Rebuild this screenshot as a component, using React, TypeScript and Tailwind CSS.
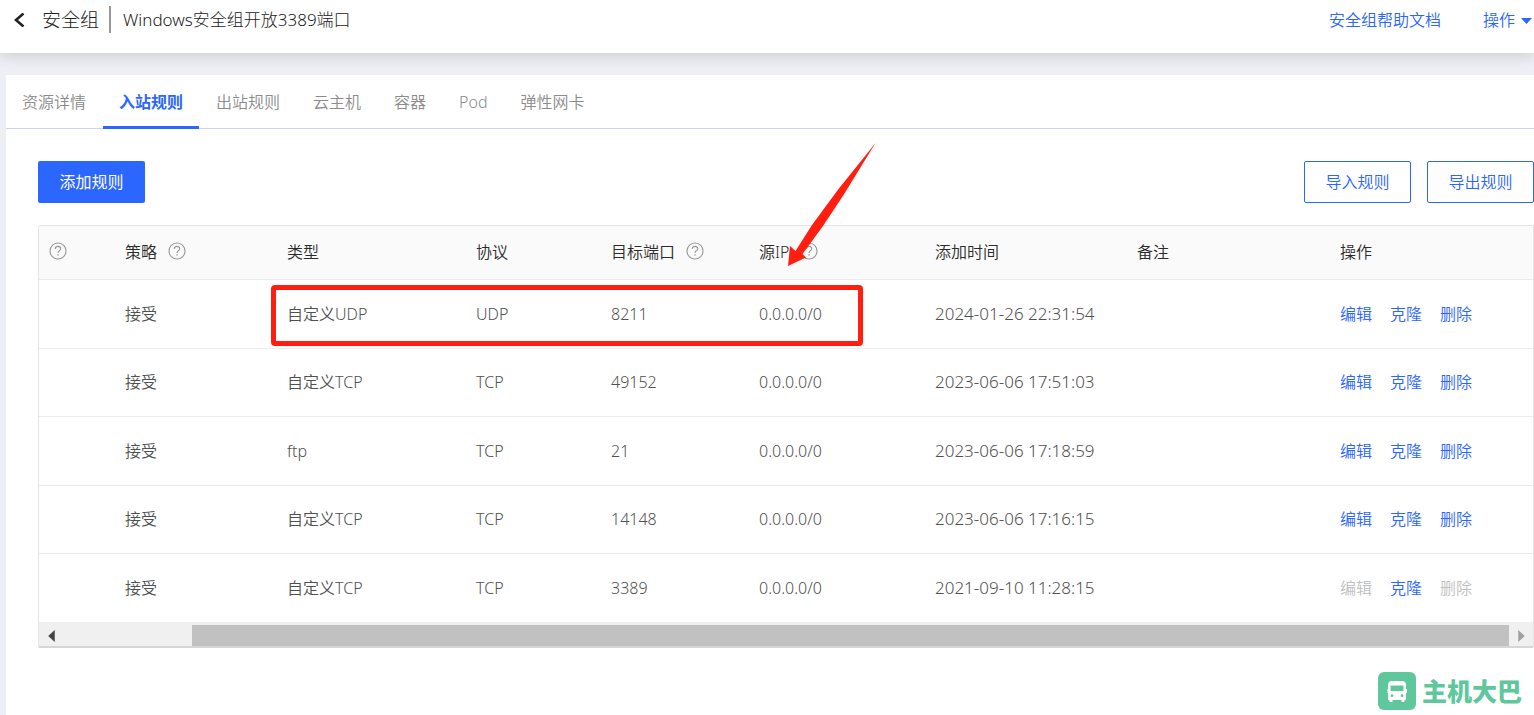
import React from "react";

type Rule = { type: string; protocol: string; port: string; source: string; time: string; locked?: boolean };

const rules: Rule[] = [
  { type: "自定义UDP", protocol: "UDP", port: "8211", source: "0.0.0.0/0", time: "2024-01-26 22:31:54" },
  { type: "自定义TCP", protocol: "TCP", port: "49152", source: "0.0.0.0/0", time: "2023-06-06 17:51:03" },
  { type: "ftp", protocol: "TCP", port: "21", source: "0.0.0.0/0", time: "2023-06-06 17:18:59" },
  { type: "自定义TCP", protocol: "TCP", port: "14148", source: "0.0.0.0/0", time: "2023-06-06 17:16:15" },
  { type: "自定义TCP", protocol: "TCP", port: "3389", source: "0.0.0.0/0", time: "2021-09-10 11:28:15", locked: true },
];

const tabs = ["资源详情", "入站规则", "出站规则", "云主机", "容器", "Pod", "弹性网卡"];

function HelpIcon() {
  return (
    <svg className="mb-[3px] size-[18px] shrink-0" viewBox="0 0 18 18" fill="none" stroke="#999" strokeWidth="1.1" aria-hidden="true">
      <circle cx="9" cy="9" r="8" />
      <path d="M6.300 7C6.300 5.400 7.400 4.400 9 4.400s2.700 1 2.700 2.300c0 1.800-2.700 2.100-2.700 4.200" />
      <path d="M9 12.300v1.400" />
    </svg>
  );
}

function Heading({ text, help }: { text: string; help?: boolean }) {
  return (
    <th className="pl-4 text-left font-[350] text-[#2b2b2b]">
      <span className="flex items-center gap-[11px]">
        {text}
        {help && <HelpIcon />}
      </span>
    </th>
  );
}

function Watermark() {
  return (
    <div className="pointer-events-none absolute inset-0 overflow-hidden" aria-hidden="true">
      <div className="grid w-max auto-rows-[195px] grid-cols-[repeat(4,322px)] pl-[75px] text-[22px] font-normal leading-[24px] text-black/[0.024]">
        {Array.from({ length: 16 }, (_, i) => (
          <span key={i} className="origin-bottom-left -rotate-20 self-start pt-[50px]">
            zhangbao14-706279
          </span>
        ))}
      </div>
    </div>
  );
}

export default function App() {
  return (
    <div className="relative flex min-h-screen flex-col overflow-hidden bg-[#eeeff4] font-['Noto_Sans','Noto_Sans_CJK_SC',sans-serif] text-base font-[350] text-[#505050]">
      <header className="flex h-[53px] items-start justify-between bg-white shadow-[0_2px_14px_rgba(0,0,0,0.16)]">
        <div className="flex h-10 items-center text-[#222]">
          <button type="button" aria-label="返回" className="ml-3 mr-4 flex">
            <svg className="size-[14px]" viewBox="0 0 14 14" fill="none" stroke="#222" strokeWidth="2.6">
              <path d="M11.500 0.500L4 7l7.500 6.500" />
            </svg>
          </button>
          <h1 className="text-[19px] font-light">安全组</h1>
          <span className="ml-[10px] mr-3 mt-[-2px] h-[27px] w-[2px] bg-[#999]" />
          <span className="text-[17px] font-light">Windows安全组开放3389端口</span>
        </div>
        <div className="flex h-10 items-center gap-[42px] text-[#2b66ff]">
          <a href="#help">安全组帮助文档</a>
          <button type="button" className="flex items-center gap-[6px] pr-[2px]">
            操作
            <svg className="mt-[2px] h-[6px] w-[11px]" viewBox="0 0 11 6" fill="#2b66ff" aria-hidden="true">
              <path d="M0 0h11L5.500 6z" />
            </svg>
          </button>
        </div>
      </header>

      <main className="ml-[6px] mt-[22px] flex-1 bg-white">
        <nav className="flex h-[54px] gap-px border-b border-[#ccd3ea] text-[#8c8c8c]">
          {tabs.map((t) => (
            <button
              key={t}
              type="button"
              className={
                t === "入站规则"
                  ? "mb-[-1px] border-b-[3px] border-[#2b66ff] px-4 pt-[2px] font-bold text-[#2b66ff]"
                  : "px-4"
              }
            >
              {t}
            </button>
          ))}
        </nav>

        <div className="flex justify-between pl-8 pt-8">
          <button type="button" className="h-[42px] w-[107px] rounded-[2px] bg-[#2b66ff] font-normal text-white">
            添加规则
          </button>
          <div className="flex gap-4 text-[#2b66ff]">
            <button type="button" className="h-[42px] w-[107px] rounded-[2px] border border-[#2b66ff]">
              导入规则
            </button>
            <button type="button" className="h-[42px] w-[107px] rounded-[2px] border border-[#2b66ff]">
              导出规则
            </button>
          </div>
        </div>

        <section className="relative ml-8 mt-[22px] rounded-[2px] border border-b-2 border-[#e4e4e4] border-b-[#d6d6d6]">
          <table className="w-full table-fixed border-collapse">
            <colgroup>
              <col className="w-[70px]" />
              <col className="w-[162px]" />
              <col className="w-[189px]" />
              <col className="w-[135px]" />
              <col className="w-[148px]" />
              <col className="w-[176px]" />
              <col className="w-[202px]" />
              <col className="w-[203px]" />
              <col />
            </colgroup>
            <thead>
              <tr className="h-[53px] border-b border-[#ebebeb] bg-[#fafafa]">
                <th className="pl-[10px]" aria-label="优先级">
                  <HelpIcon />
                </th>
                <Heading text="策略" help />
                <Heading text="类型" />
                <Heading text="协议" />
                <Heading text="目标端口" help />
                <Heading text="源IP" help />
                <Heading text="添加时间" />
                <Heading text="备注" />
                <Heading text="操作" />
              </tr>
            </thead>
            <tbody>
              {rules.map((r) => (
                <tr key={r.time} className="border-b border-[#ebebeb] last:border-b-0 odd:h-[69px] even:h-[68px]">
                  <td />
                  <td className="pl-4">接受</td>
                  <td className="pl-4">{r.type}</td>
                  <td className="pl-4">{r.protocol}</td>
                  <td className="pl-4">{r.port}</td>
                  <td className="pl-4">{r.source}</td>
                  <td className="pl-4 text-[17px]">{r.time}</td>
                  <td />
                  <td className="pl-4">
                    <div className="flex gap-[18px] text-[#2b66ff]">
                      <button type="button" disabled={r.locked} className="disabled:text-[#c0c0c0]">编辑</button>
                      <button type="button">克隆</button>
                      <button type="button" disabled={r.locked} className="disabled:text-[#c0c0c0]">删除</button>
                    </div>
                  </td>
                </tr>
              ))}
            </tbody>
          </table>

          <div className="flex h-6 bg-[#f0f0f0] pt-[3px]">
            <button type="button" aria-label="向左滚动" className="flex w-6 items-center justify-center">
              <svg className="h-[12px] w-[7px]" viewBox="0 0 6 11" fill="#444"><path d="M6 0v11L0 5.500z" /></svg>
            </button>
            <div className="flex flex-1 pl-[129px]">
              <div className="flex-1 bg-[#c1c1c1]" />
            </div>
            <button type="button" aria-label="向右滚动" className="flex w-6 items-center justify-center">
              <svg className="h-[12px] w-[7px]" viewBox="0 0 6 11" fill="#a0a0a0"><path d="M0 0v11l6-5.500z" /></svg>
            </button>
          </div>

          <div className="pointer-events-none absolute left-[232px] top-[59px] h-[61px] w-[592px] rounded-[4px] border-[5px] border-[#ff1e10]" />
          <svg className="pointer-events-none absolute left-[748px] top-[-84px] h-[126px] w-[90px]" viewBox="0 0 90 126" fill="#ff1e10" aria-hidden="true">
            <path d="M88.500 1L56.500 53L36 84L15.500 112L19 115.500L1 124L3 104L8.500 109L25 83L51.500 47Z" />
          </svg>
        </section>
      </main>

      <Watermark />

      <div className="absolute bottom-[5px] right-3 flex items-center gap-[6px] text-[#5ec79b]">
        <svg className="size-[38px]" viewBox="0 0 38 38" aria-hidden="true">
          <rect width="38" height="38" rx="6" fill="#5ec79b" />
          <path fill="#fff" fillRule="evenodd" d="M14 9h10q4 0 4 4v4h1v4h-1v7h-1.500v2h-3v-2h-9v2h-3v-2H10v-7H9.500v-4H10v-4q0-4 4-4zM12.500 13.500v5.500h13v-5.500zM14 22.300a1.400 1.400 0 1 0 0 2.800 1.400 1.400 0 0 0 0-2.800zM24 22.300a1.400 1.400 0 1 0 0 2.800 1.400 1.400 0 0 0 0-2.800z" />
        </svg>
        <span className="text-[25px] font-black leading-[38px]">主机大巴</span>
      </div>
    </div>
  );
}
